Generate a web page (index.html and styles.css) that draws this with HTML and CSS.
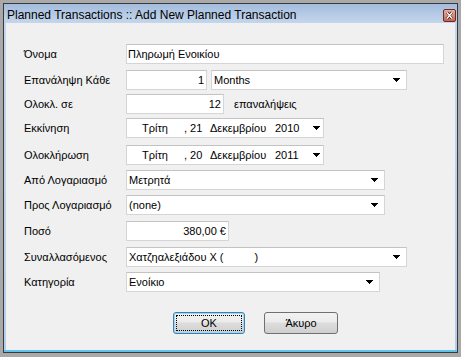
FILE: index.html
```html
<!DOCTYPE html>
<html>
<head>
<meta charset="utf-8">
<link rel="stylesheet" href="styles.css">
</head>
<body>
<div class="window">
  <div class="titlebar">
    <span class="title">Planned Transactions :: Add New Planned Transaction</span>
    <span class="close">
      <svg width="13" height="13" viewBox="0 0 13 13">
        <defs>
          <linearGradient id="cg" x1="0" y1="0" x2="0" y2="1">
            <stop offset="0" stop-color="#e8b0a6"/>
            <stop offset="0.5" stop-color="#d98a7c"/>
            <stop offset="1" stop-color="#c8604f"/>
          </linearGradient>
        </defs>
        <rect x="0.5" y="0.5" width="12" height="12" rx="1.5" fill="url(#cg)" stroke="#6e2a22"/>
        <path d="M4 3.5 L6.5 6 L9 3.5 M4 9.5 L6.5 7 L9 9.5" stroke="#3a1a16" stroke-width="2.6" fill="none"/>
        <path d="M4 3.5 L9 9.5 M9 3.5 L4 9.5" stroke="#ffffff" stroke-width="1.4" fill="none"/>
      </svg>
    </span>
  </div>
  <div class="frame">
    <div class="content">
      <div class="form">
        <div class="label">Όνομα</div>
        <div class="ctl"><div class="box w-name"><span class="txt">Πληρωμή Ενοικίου</span></div></div>

        <div class="label">Επανάληψη Κάθε</div>
        <div class="ctl">
          <div class="box w-num right"><span class="txt">1</span></div>
          <div class="box w-months combo"><span class="txt">Months</span><svg class="arrow" width="7" height="4" viewBox="0 0 7 4"><path d="M0 0h7v1h-1v1h-1v1h-1v1h-1v-1h-1v-1h-1v-1h-1z" fill="#000"/></svg></div>
        </div>

        <div class="label">Ολοκλ. σε</div>
        <div class="ctl">
          <div class="box w-count right"><span class="txt">12</span></div>
          <span class="after">επαναλήψεις</span>
        </div>

        <div class="label">Εκκίνηση</div>
        <div class="ctl">
          <div class="box w-date date">
            <span class="d-day">Τρίτη</span><span class="d-num">, 21</span><span class="d-month">Δεκεμβρίου</span><span class="d-year">2010</span>
            <svg class="arrow d-arrow" width="7" height="4" viewBox="0 0 7 4"><path d="M0 0h7v1h-1v1h-1v1h-1v1h-1v-1h-1v-1h-1v-1h-1z" fill="#000"/></svg>
          </div>
        </div>

        <div class="label">Ολοκλήρωση</div>
        <div class="ctl">
          <div class="box w-date date">
            <span class="d-day">Τρίτη</span><span class="d-num">, 20</span><span class="d-month">Δεκεμβρίου</span><span class="d-year">2011</span>
            <svg class="arrow d-arrow" width="7" height="4" viewBox="0 0 7 4"><path d="M0 0h7v1h-1v1h-1v1h-1v1h-1v-1h-1v-1h-1v-1h-1z" fill="#000"/></svg>
          </div>
        </div>

        <div class="label">Από Λογαριασμό</div>
        <div class="ctl"><div class="box w-acc combo"><span class="txt">Μετρητά</span><svg class="arrow" width="7" height="4" viewBox="0 0 7 4"><path d="M0 0h7v1h-1v1h-1v1h-1v1h-1v-1h-1v-1h-1v-1h-1z" fill="#000"/></svg></div></div>

        <div class="label">Προς Λογαριασμό</div>
        <div class="ctl"><div class="box w-acc combo"><span class="txt">(none)</span><svg class="arrow" width="7" height="4" viewBox="0 0 7 4"><path d="M0 0h7v1h-1v1h-1v1h-1v1h-1v-1h-1v-1h-1v-1h-1z" fill="#000"/></svg></div></div>

        <div class="label">Ποσό</div>
        <div class="ctl"><div class="box w-amount right"><span class="txt">380,00 €</span></div></div>

        <div class="label">Συναλλασόμενος</div>
        <div class="ctl"><div class="box w-payee combo"><span class="txt">Χατζηαλεξιάδου Χ (<span class="blank"></span>)</span><svg class="arrow" width="7" height="4" viewBox="0 0 7 4"><path d="M0 0h7v1h-1v1h-1v1h-1v1h-1v-1h-1v-1h-1v-1h-1z" fill="#000"/></svg></div></div>

        <div class="label">Κατηγορία</div>
        <div class="ctl"><div class="box w-cat combo"><span class="txt">Ενοίκιο</span><svg class="arrow" width="7" height="4" viewBox="0 0 7 4"><path d="M0 0h7v1h-1v1h-1v1h-1v1h-1v-1h-1v-1h-1v-1h-1z" fill="#000"/></svg></div></div>
      </div>
      <div class="buttons">
        <button class="btn btn-ok"><span class="focus">OK</span></button>
        <button class="btn btn-cancel">Άκυρο</button>
      </div>
    </div>
  </div>
</div>
</body>
</html>
```

FILE: styles.css
```css
html, body {
  margin: 0;
  padding: 0;
}
body {
  width: 461px;
  height: 357px;
  background: #a9a9a9;
  font-family: "Liberation Sans", Arial, sans-serif;
  font-size: 11px;
  color: #000;
  overflow: hidden;
}
.window {
  margin: 3px 0 0 3px;
  width: 453px;
  height: 348px;
  border: 1px solid #3a3a3a;
  display: flex;
  flex-direction: column;
  background: #b9d1ea;
}
.titlebar {
  height: 19px;
  flex: none;
  display: flex;
  align-items: center;
  justify-content: space-between;
  background: linear-gradient(#a3bcdc, #b7cce6 60%, #c4d6ec);
  padding: 0 1px 0 3px;
}
.title {
  font-family: "Liberation Sans", Arial, sans-serif;
  font-size: 12px;
  color: #000;
  padding-top: 3px;
}
.close {
  display: flex;
  margin-top: 4px;
}
.frame {
  flex: 1;
  display: flex;
  padding: 0 2px 2px 2px;
  background: linear-gradient(to bottom, #c4d6ec, #b4cde9);
  border-bottom: 0;
  box-shadow: inset 0 -2px 0 #5fc3ef;
}
.content {
  flex: 1;
  background: #f0f0f0;
  padding: 21px 0 0 18px;
}
.form {
  display: grid;
  grid-template-columns: 102px 1fr;
  grid-template-rows: 26px 24px 24px 27px 25px 25px 26px 26px 25px 20px;
}
.label {
  line-height: 20px;
  height: 20px;
  white-space: nowrap;
}
.ctl {
  display: flex;
  align-items: center;
  height: 20px;
  gap: 4px;
}
.box {
  box-sizing: border-box;
  height: 20px;
  background: #fff;
  border: 1px solid #d5d5d5;
  border-top-color: #c3c3c3;
  display: flex;
  align-items: center;
  padding: 0 2px 0 1px;
  white-space: nowrap;
  overflow: hidden;
}
.box.right {
  justify-content: flex-end;
  padding-right: 2px;
}
.combo .txt {
  flex: 1;
  padding-left: 1px;
}
.combo .arrow {
  margin-right: 4px;
}
.w-name { width: 318px; }
.w-num { width: 81px; }
.w-months { width: 196px; }
.w-count { width: 98px; }
.w-date { width: 198px; }
.w-acc { width: 259px; }
.w-amount { width: 103px; }
.w-payee { width: 281px; }
.w-cat { width: 254px; }
.after {
  margin-left: 6px;
}
.date {
  padding-left: 15px;
}
.d-day { width: 42px; }
.d-num { width: 26px; }
.d-month { width: 65px; }
.d-year { width: 38px; }
.d-arrow { margin-left: 0; }
.blank {
  display: inline-block;
  width: 31px;
}
.buttons {
  display: flex;
  gap: 19px;
  margin: 20px 0 0 149px;
}
.btn {
  box-sizing: border-box;
  height: 22px;
  padding: 0;
  font-family: "Liberation Sans", Arial, sans-serif;
  font-size: 11px;
  color: #000;
  border: 1px solid #707070;
  border-radius: 3px;
  background: linear-gradient(#f2f2f2 0%, #ebebeb 45%, #dddddd 50%, #cfcfcf 100%);
  display: flex;
  align-items: center;
  justify-content: center;
}
.btn-ok {
  width: 72px;
  border-color: #3c7fb1;
  box-shadow: inset 0 0 0 1px #9fd5f5;
  padding: 2px;
}
.focus {
  flex: 1;
  align-self: stretch;
  display: flex;
  align-items: center;
  justify-content: center;
  outline: 1px dotted #000;
  outline-offset: -1px;
}
.btn-cancel {
  width: 74px;
}
```
